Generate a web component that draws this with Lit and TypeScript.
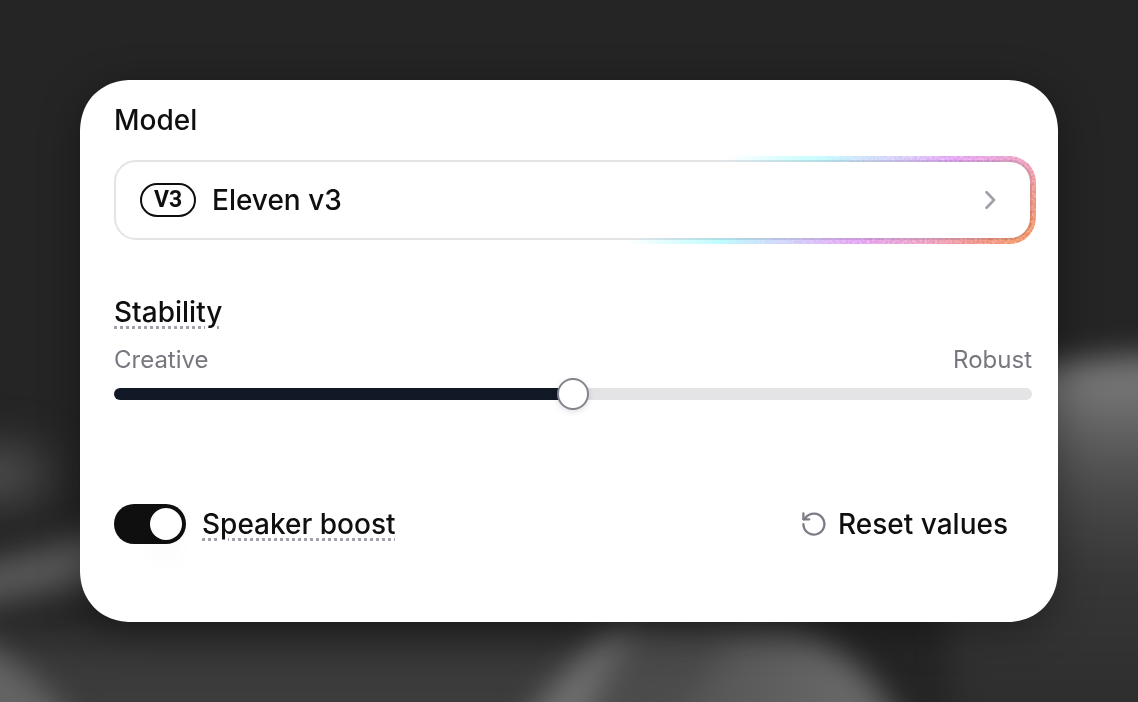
import { LitElement, html, css, svg } from "lit";
import { customElement, state } from "lit/decorators.js";

@customElement("app-root")
export class AppRoot extends LitElement {
  @state() private stability = 50;
  @state() private boost = true;

  static styles = css`
    :host {
      display: block;
      font-family: "Inter", "Liberation Sans", sans-serif;
      color: #0f0f10;
    }
    * {
      box-sizing: border-box;
    }
    .page {
      position: relative;
      min-height: 100vh;
      padding: 80px;
      background: #252525;
      overflow: hidden;
    }
    .backdrop {
      position: absolute;
      inset: 0;
      width: 100%;
      height: 100%;
    }
    .card {
      position: relative;
      padding: 20px 26px 78px 34px;
      border-radius: 48px;
      background: #fff;
      box-shadow: 0 8px 40px rgba(0, 0, 0, 0.36);
    }
    @supports (corner-shape: superellipse(1.1)) {
      .card {
        border-radius: 52px;
        corner-shape: superellipse(1.1);
      }
    }
    .title {
      margin: 0;
      font-size: 28px;
      line-height: 40px;
      font-weight: 500;
    }
    .hint {
      text-decoration: underline dotted #a1a1aa 3px;
      text-underline-offset: 4px;
    }
    .model {
      position: relative;
      display: flex;
      align-items: center;
      gap: 16px;
      width: 100%;
      height: 80px;
      margin: 20px 0 52px;
      padding: 0 30px 0 24px;
      border: 2px solid #e4e4e7;
      border-radius: 22px;
      background: #fff;
      color: inherit;
      font: inherit;
      font-size: 28px;
      line-height: 40px;
      font-weight: 500;
      text-align: left;
      cursor: pointer;
    }
    .ring {
      position: absolute;
      inset: -6px;
      padding: 6px;
      border-radius: 26px;
      background: linear-gradient(
        140deg,
        rgba(190, 252, 255, 0) 60%,
        #befcff 69%,
        #d0cdf8 76%,
        #e29cf6 82%,
        #ea97bd 89%,
        #ee8a80 94%,
        #f28a4f 99%
      );
      mask: linear-gradient(#000 0 0) content-box exclude, linear-gradient(#000 0 0);
      mix-blend-mode: multiply;
      pointer-events: none;
    }
    .grain {
      position: absolute;
      inset: 0;
      width: 100%;
      height: 100%;
      border-radius: 26px;
      opacity: 0.4;
      mask: linear-gradient(to right, transparent 60%, #000 80%);
    }
    .badge {
      display: grid;
      place-items: center;
      width: 56px;
      height: 34px;
      border: 2px solid #0f0f10;
      border-radius: 17px;
      font-family: "Roboto", "Liberation Sans", sans-serif;
      font-size: 23px;
      line-height: 24px;
      font-weight: 700;
    }
    .name {
      flex: 1;
    }
    .chevron {
      width: 20px;
      height: 24px;
    }
    .scale {
      display: flex;
      justify-content: space-between;
      margin-top: 12px;
      font-size: 24px;
      line-height: 32px;
      color: #777780;
    }
    .slider {
      appearance: none;
      display: block;
      width: 100%;
      height: 32px;
      margin: 2px 0 94px;
      background: none;
      cursor: pointer;
    }
    .slider::-webkit-slider-runnable-track {
      height: 12px;
      border-radius: 6px;
      background: linear-gradient(to right, #111826 var(--fill), #e4e4e6 var(--fill));
    }
    .slider::-webkit-slider-thumb {
      appearance: none;
      width: 32px;
      height: 32px;
      margin-top: -10px;
      border: 2px solid #83838d;
      border-radius: 50%;
      background: #fff;
      box-shadow: 0 2px 6px rgba(0, 0, 0, 0.12);
    }
    .footer {
      display: flex;
      align-items: center;
      justify-content: space-between;
      padding-right: 24px;
      font-size: 28px;
      line-height: 40px;
      font-weight: 500;
    }
    .boost {
      display: flex;
      align-items: center;
      gap: 16px;
      cursor: pointer;
    }
    .switch {
      appearance: none;
      display: flex;
      width: 72px;
      height: 40px;
      margin: 0;
      padding: 4px;
      border-radius: 20px;
      background: #d4d4d8;
      cursor: pointer;
    }
    .switch:checked {
      justify-content: flex-end;
      background: #0f0f10;
    }
    .switch::before {
      content: "";
      width: 32px;
      height: 32px;
      border-radius: 50%;
      background: #fff;
      box-shadow: 0 24px 24px rgba(0, 0, 0, 0.02);
    }
    .reset {
      display: flex;
      align-items: center;
      gap: 12px;
      padding: 0;
      border: 0;
      background: none;
      color: inherit;
      font: inherit;
      cursor: pointer;
    }
    .reset-icon {
      width: 24px;
      height: 24px;
    }
  `;

  private backdrop() {
    return svg`
      <svg class="backdrop" viewBox="0 0 1138 702" preserveAspectRatio="none" aria-hidden="true">
        <defs>
          <filter id="soft" x="-20%" y="-50%" width="140%" height="200%" color-interpolation-filters="sRGB">
            <feGaussianBlur stdDeviation="15" />
          </filter>
          <filter id="softer" x="-50%" y="-80%" width="200%" height="260%" color-interpolation-filters="sRGB">
            <feGaussianBlur stdDeviation="24" />
          </filter>
          <linearGradient id="right" x1="0" y1="345" x2="0" y2="702" gradientUnits="userSpaceOnUse">
            <stop offset="0" stop-color="#7a7a7a" />
            <stop offset="0.14" stop-color="#727272" />
            <stop offset="0.3" stop-color="#585858" />
            <stop offset="0.45" stop-color="#464646" />
            <stop offset="0.65" stop-color="#373737" />
            <stop offset="1" stop-color="#2e2e2e" />
          </linearGradient>
          <linearGradient id="low" x1="0" y1="620" x2="0" y2="702" gradientUnits="userSpaceOnUse">
            <stop offset="0" stop-color="#464646" />
            <stop offset="1" stop-color="#4c4c4c" />
          </linearGradient>
          <linearGradient id="lowRight" x1="620" y1="0" x2="850" y2="0" gradientUnits="userSpaceOnUse">
            <stop offset="0" stop-color="#686868" stop-opacity="0" />
            <stop offset="1" stop-color="#686868" />
          </linearGradient>
        </defs>
        <g filter="url(#softer)">
          <path d="M-60 640 H640 V800 H-60 Z" fill="#3c3c3c" />
          <ellipse cx="-10" cy="474" rx="60" ry="24" fill="#555" />
        </g>
        <g filter="url(#soft)">
          <path d="M930 400 Q1060 347 1220 356 V800 H960 Z" fill="url(#right)" />
          <path d="M-60 568 Q40 556 130 518 V576 Q40 594 -60 616 Z" fill="#585858" />
          <path d="M-60 630 Q34 650 96 760 H-60 Z" fill="#646464" />
          <path d="M510 770 Q550 680 620 625 H780 Q870 640 920 770 Z" fill="url(#low)" />
          <path d="M640 770 L730 640 H800 Q876 650 920 770 Z" fill="url(#lowRight)" />
          <path d="M496 770 Q536 690 610 634 L634 634 Q590 680 576 770 Z" fill="#707070" />
        </g>
      </svg>
    `;
  }

  render() {
    return html`
      <main class="page">
        ${this.backdrop()}
        <section class="card">
          <h2 class="title">Model</h2>
          <button class="model" type="button">
            <span class="badge">V3</span>
            <span class="name">Eleven v3</span>
            <svg class="chevron" viewBox="0 0 20 24" fill="none" stroke="#a1a1aa" stroke-width="2.7" stroke-linecap="round" stroke-linejoin="round" aria-hidden="true">
              <path d="M6.5 4.3 14 12l-7.5 7.7" />
            </svg>
            <span class="ring">
              <svg class="grain" aria-hidden="true">
                <filter id="noise" color-interpolation-filters="sRGB">
                  <feTurbulence type="fractalNoise" baseFrequency="0.4" numOctaves="2" />
                  <feColorMatrix type="matrix" values="0 0 0 0 1  0 0 0 0 1  0 0 0 0 1  2 0 0 0 -0.6" />
                </filter>
                <rect width="100%" height="100%" filter="url(#noise)" />
              </svg>
            </span>
          </button>
          <label class="title" for="stability"><span class="hint">Stability</span></label>
          <div class="scale"><span>Creative</span><span>Robust</span></div>
          <input
            id="stability"
            class="slider"
            type="range"
            min="0"
            max="100"
            .value=${String(this.stability)}
            style="--fill: ${this.stability}%"
            @input=${(e: Event) => (this.stability = Number((e.target as HTMLInputElement).value))}
          />
          <div class="footer">
            <label class="boost">
              <input
                class="switch"
                type="checkbox"
                .checked=${this.boost}
                @change=${(e: Event) => (this.boost = (e.target as HTMLInputElement).checked)}
              />
              <span class="hint">Speaker boost</span>
            </label>
            <button
              class="reset"
              type="button"
              @click=${() => {
                this.stability = 50;
                this.boost = true;
              }}
            >
              <svg class="reset-icon" viewBox="0 0 24 24" fill="none" stroke="#7c7c86" stroke-width="2.3" stroke-linecap="round" stroke-linejoin="round" aria-hidden="true">
                <path d="M1.4 1.4V7.3H7.2" />
                <path d="M1.4 12.2A10.5 10.5 0 1 0 3.6 5.6L1.6 7.3" />
              </svg>
              Reset values
            </button>
          </div>
        </section>
      </main>
    `;
  }
}
